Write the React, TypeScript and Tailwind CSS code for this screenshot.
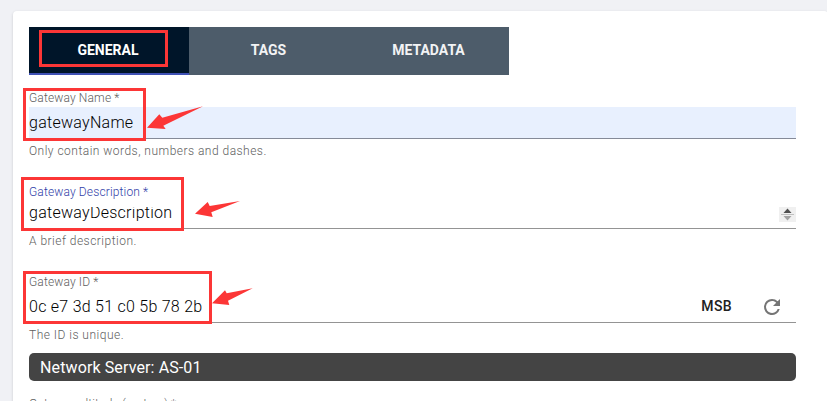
import type { ReactNode } from 'react';

function Label({ children, active = false }: { children: ReactNode; active?: boolean }) {
  return (
    <div className={`h-4 text-[12px] leading-4 font-light tracking-[0.14px] whitespace-nowrap ${active ? 'text-[#3040a8]' : 'text-[#606060]'}`}>
      {children}
    </div>
  );
}

function Hint({ children }: { children: ReactNode }) {
  return <div className="h-4 text-[12px] leading-4 font-light tracking-[0.48px] whitespace-nowrap text-[#606060]">{children}</div>;
}

function Tab({ children, selected = false }: { children: ReactNode; selected?: boolean }) {
  return (
    <button
      className={`flex h-12 w-40 items-center justify-center border-b-2 text-[14px] font-bold ${
        selected ? 'border-[#3f51b5] bg-[#001529] pr-[2px] text-white' : 'border-[#4d5c6a] bg-[#4d5c6a] pr-px text-[#f2f3f4]'
      }`}
    >
      {children}
    </button>
  );
}

function Annotations() {
  return (
    <svg className="pointer-events-none absolute top-0 left-0" width="827" height="401" viewBox="0 0 827 401">
      <g fill="none" stroke="#fc3636" strokeWidth="3">
        <rect x="40.5" y="31.5" width="126" height="34" />
        <rect x="24.5" y="89.5" width="120" height="50" />
        <rect x="22.5" y="178.5" width="160" height="51" />
        <rect x="24.5" y="272.5" width="186" height="50" />
      </g>
      <g fill="#fc3636">
        <path d="M147 127.7 159.3 114.3 162.3 117.7 203 106.3 163.3 125.7 165.7 129Z" />
        <path d="M195 213.7 207.7 202 209.7 206 240 201 211.3 212.3 212.7 217Z" />
        <path d="M212 303.3 225 290.3 226.7 293.3 252.7 288.3 228 300.7 229.3 305Z" />
      </g>
    </svg>
  );
}

export default function App() {
  return (
    <div className="relative h-[401px] w-[827px] overflow-hidden bg-[#f0f1f5] pt-[11px] pl-[13px] font-[Roboto,sans-serif]">
      <main className="h-[420px] w-[815px] rounded-[4px] bg-white pt-4 pl-4 shadow-[0_1px_3px_rgba(0,0,0,0.16)]">
        <nav className="flex w-[480px]">
          <Tab selected>GENERAL</Tab>
          <Tab>TAGS</Tab>
          <Tab>METADATA</Tab>
        </nav>

        <section className="mt-[15px] w-[767px]">
          <Label>Gateway Name *</Label>
          <div className="mt-px h-8 border-b border-[#858a98] bg-[#e8f0fe] text-[16px] leading-[31px] font-light tracking-[0.27px] text-black">
            gatewayName
          </div>
          <div className="mt-1">
            <Hint>Only contain words, numbers and dashes.</Hint>
          </div>
        </section>

        <section className="mt-[25px] w-[767px]">
          <Label active>Gateway Description *</Label>
          <div className="mt-[7px] flex h-[22px] items-start justify-between overflow-hidden border-b border-[#949494] text-[16px] font-light tracking-[0.27px] text-black">
            <span className="-mt-[3px] leading-[18px]">gatewayDescription</span>
            <svg className="shrink-0" width="17" height="15" viewBox="0 0 17 15">
              <path d="M0 0h17v15H0Z" fill="#f0f0f0" />
              <path d="M8.5 1.5 12.5 6h-8Z" fill="#505050" />
              <path d="M2 7h13v1H2Z" fill="#c0c0c0" />
              <path d="M4.5 9h8l-4 4.5Z" fill="#a3a3a3" />
            </svg>
          </div>
          <div className="mt-1">
            <Hint>A brief description.</Hint>
          </div>
        </section>

        <section className="mt-[25px] w-[767px]">
          <Label>Gateway ID *</Label>
          <div className="flex h-[33px] items-center border-b border-[#949494] text-[16px] font-light tracking-[0.26px] text-black">
            <span className="pt-[2px]">0c e7 3d 51 c0 5b 78 2b</span>
            <button className="ml-auto text-[14px] font-medium tracking-[0.4px] text-[#212121]">MSB</button>
            <svg className="mt-[2px] mr-3 ml-7 shrink-0" width="24" height="24" viewBox="0 0 24 24" fill="#757575">
              <path d="M17.65 6.35A7.958 7.958 0 0 0 12 4a8 8 0 1 0 7.73 10h-2.08A6 6 0 1 1 12 6c1.66 0 3.14.69 4.22 1.78L13 11h7V4l-2.35 2.35Z" />
            </svg>
          </div>
          <div className="mt-1">
            <Hint>The ID is unique.</Hint>
          </div>
        </section>

        <div className="mt-[10px] flex h-7 w-[767px] items-center rounded-[5px] bg-[#444444] pt-[2px] pl-[11px] text-[16px] font-normal tracking-[0.12px] text-white">
          Network Server: AS-01
        </div>
        <div className="mt-[15px]">
          <Label>Gateway altitude (meters) *</Label>
        </div>
      </main>
      <Annotations />
    </div>
  );
}
